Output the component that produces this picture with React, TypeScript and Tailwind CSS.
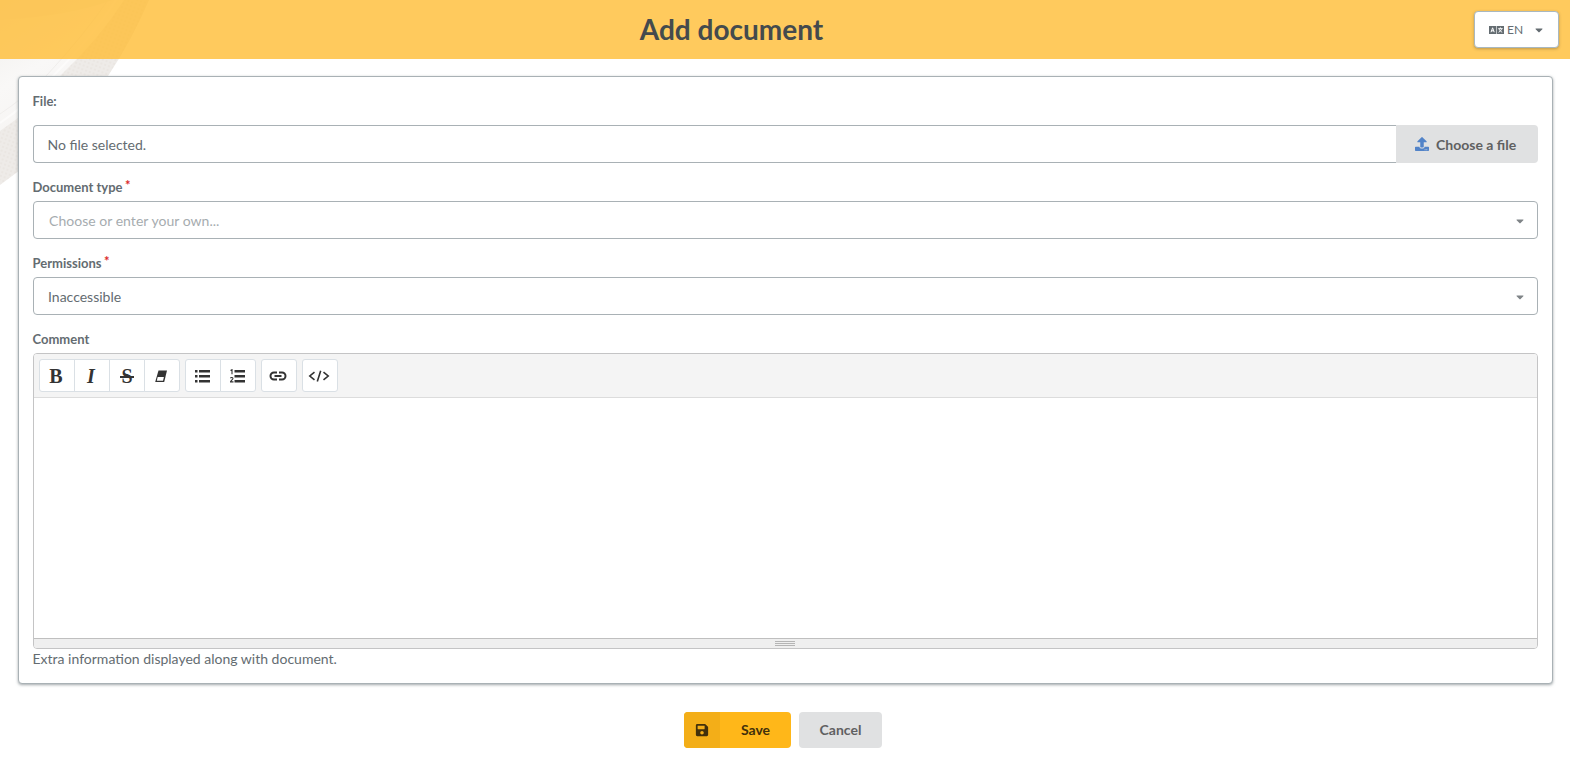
import React from "react";
import { FaUpload, FaSave, FaCaretDown } from "react-icons/fa";

const toolBtn = "flex h-[33px] w-[36px] items-center justify-center border border-[#dae0e5] bg-white text-[#333]";
const serifGlyph = "font-['Liberation_Serif',serif] text-[20px] font-bold leading-none pt-[1px] pr-[2px]";

function Label({ children, required }: { children: React.ReactNode; required?: boolean }) {
  return (
    <label className="-ml-[0.5px] block h-[18px] text-[13px] font-bold leading-[18px]">
      {children}
      {required && <span className="relative -top-[2px] ml-[2.5px] text-[13px] text-[#db2828]">*</span>}
    </label>
  );
}

function LanguageIcon() {
  return (
    <svg width="15" height="8" viewBox="0 0 15 8">
      <path d="M0 0h7.200v8H0zM7.800 0H15v8H7.800z" fill="currentColor" />
      <path d="M2 6.200 3.600 1.800 5.200 6.200M2.600 4.800h2" fill="none" stroke="#fff" strokeWidth="1" />
      <path d="M9.200 2.600h4.400M11.400 1.400v1.200M12.800 2.600Q12 5.200 9.600 6.300M10 3Q11 5.400 13.200 6.300" fill="none" stroke="#fff" strokeWidth="0.900" />
    </svg>
  );
}

function Backdrop() {
  return (
    <svg className="absolute left-0 top-0 -z-10" width="150" height="190" viewBox="0 0 150 190">
      <defs>
        <linearGradient id="fade" x1="0" y1="0" x2="0.6" y2="1">
          <stop offset="0" stopColor="#f0eeeb" />
          <stop offset="0.5" stopColor="#f9f8f7" />
          <stop offset="1" stopColor="#f5f3f1" />
        </linearGradient>
        <pattern id="dots" width="4" height="4" patternUnits="userSpaceOnUse" patternTransform="rotate(20)">
          <rect width="4" height="4" fill="#eeebe8" />
          <circle cx="1" cy="1" r="0.8" fill="#e6e1dc" />
        </pattern>
      </defs>
      <path d="M149 0 Q132 40 108 76 Q70 135 0 185 V0Z" fill="url(#dots)" />
      <path d="M124 0 Q100 38 62 74 L18 118 L0 131 V0Z" fill="url(#fade)" />
      <path d="M0 0H112Q70 16 0 20Z" fill="#ebe8e4" opacity="0.6" />
      <path d="M116 0 Q94 35 54 75 Q28 104 0 123" fill="none" stroke="#fcfbfa" strokeWidth="2" />
      <path d="M108 0 Q84 35 47 75 Q24 98 0 114" fill="none" stroke="#f0eeec" strokeWidth="1" />
    </svg>
  );
}

export default function App() {
  return (
    <div className="relative isolate h-[779px] w-full overflow-hidden bg-white font-[Lato,sans-serif] text-[14px] text-[#646c71]">
      <Backdrop />
      <header className="flex h-[59px] items-center bg-[#ffbd35]/80 pr-[11px]">
        <h1 className="mr-[11px] flex-1 pb-[2px] text-center text-[28px] font-bold leading-[36px] text-[#444a4d]">Add document</h1>
        <button className="flex h-[37px] w-[85px] items-center rounded-[4px] border border-[#a9b8c0] bg-white pl-[14px] text-[12px] shadow-[0_1px_3px_rgba(34,36,38,0.3)]">
          <LanguageIcon />
          <span className="ml-[3px]">EN</span>
          <FaCaretDown size={12} className="ml-[10px]" />
        </button>
      </header>
      <main className="mx-[18px] mr-[17px] mt-[17px] h-[608px] rounded-[4px] border border-[#a9b1b5] bg-white px-[14px] pt-[15px] shadow-[0_1px_3px_rgba(100,110,115,0.6)]">
        <Label>File:</Label>
        <div className="mt-[15px] flex h-[38px]">
          <div className="flex flex-1 items-center rounded-l-[4px] border border-r-0 border-[#a9b1b5] pl-[13.500px]">No file selected.</div>
          <button className="flex w-[142px] items-center rounded-r-[4px] bg-[#e0e1e2] pl-[19px] font-bold text-[#5f6061]">
            <FaUpload size={14} className="mr-[7px] text-[#5283c8]" />
            Choose a file
          </button>
        </div>
        <div className="mt-[15px]"><Label required>Document type</Label></div>
        <div className="mt-[5px] flex h-[38px] items-center justify-between rounded-[4px] border border-[#a9b1b5] pl-[15px] pr-[11px] text-[#a6acaf]">
          <span className="tracking-[0.03px]">Choose or enter your own...</span>
          <FaCaretDown size={12} className="mt-[2px] text-[#7f8487]" />
        </div>
        <div className="mt-[15px]"><Label required>Permissions</Label></div>
        <div className="mt-[5px] flex h-[38px] items-center justify-between rounded-[4px] border border-[#a9b1b5] pl-[14px] pr-[11px]">
          Inaccessible
          <FaCaretDown size={12} className="mt-[2px] text-[#7f8487]" />
        </div>
        <div className="mt-[15px]"><Label>Comment</Label></div>
        <div className="mt-[5px] flex h-[296px] flex-col overflow-hidden rounded-[4px] border border-[#c4c4c5]">
          <div className="flex h-[44px] gap-[5px] border-b border-[#dcdcdc] bg-[#f4f4f4] pl-[5px] pt-[5px]">
            <div className="flex -space-x-px">
              <button className={`${toolBtn} ${serifGlyph} rounded-l-[3px]`}>B</button>
              <button className={`${toolBtn} ${serifGlyph} italic`}>I</button>
              <button className={`${toolBtn} ${serifGlyph}`}>
                <span className="relative left-px">
                  S
                  <i className="absolute -left-[1.5px] top-[10px] h-[2px] w-[14px] bg-[#333]" />
                </span>
              </button>
              <button className={`${toolBtn} rounded-r-[3px] pr-[2px]`}>
                <svg width="14" height="14" viewBox="0 0 14 14">
                  <path d="M4.500 1.500H13l-2.800 11.500H1.200z" fill="currentColor" />
                  <path d="M3.700 8h6.200l-.9 3.700H2.800z" fill="#fff" />
                </svg>
              </button>
            </div>
            <div className="flex -space-x-px">
              <button className={`${toolBtn} rounded-l-[3px]`}>
                <svg width="16" height="14" viewBox="0 0 16 14" fill="currentColor"><path d="M0 1h2.500v2.500H0zM4 1h11v2.500H4zM0 6h2.500v2.500H0zM4 6h11v2.500H4zM0 11h2.500v2.500H0zM4 11h11v2.500H4z" /></svg>
              </button>
              <button className={`${toolBtn} rounded-r-[3px]`}>
                <svg width="16" height="14" viewBox="0 0 16 14">
                  <path d="M4.500 1H15v2.500H4.500zM4.500 6H15v2.500H4.500zM4.500 11H15v2.500H4.500z" fill="currentColor" />
                  <path d="M.5 1.500 2 .7v4.600M.4 9.200c.5-1.200 2.800-.9 2.500.5C2.600 10.700.6 11.800.5 12.900h3" fill="none" stroke="currentColor" strokeWidth="1.100" />
                </svg>
              </button>
            </div>
            <button className={`${toolBtn} rounded-[3px] pr-[2px]`}>
              <svg width="18" height="10" viewBox="0 0 18 10" fill="none" stroke="currentColor" strokeWidth="2"><path d="M8 1.500H5a3.500 3.500 0 0 0 0 7h3M10 1.500h3a3.500 3.500 0 0 1 0 7h-3M5.500 5h7" /></svg>
            </button>
            <button className={`${toolBtn} rounded-[3px] pr-[2px]`}>
              <svg width="22" height="12" viewBox="0 0 22 12" fill="none" stroke="currentColor" strokeWidth="1.600"><path d="M6.500 2.200 1.800 6l4.700 3.800M15.500 2.200 20.200 6l-4.700 3.800M12.700.8l-3.400 10.700" /></svg>
            </button>
          </div>
          <div className="flex-1" />
          <div className="flex h-[10px] flex-col items-center gap-px border-t border-[#bfbfbf] bg-[#efefef] pr-[2px] pt-[2px]">
            <i className="h-px w-[20px] bg-[#b5b5b5]" />
            <i className="h-px w-[20px] bg-[#b5b5b5]" />
            <i className="h-px w-[20px] bg-[#b5b5b5]" />
          </div>
        </div>
        <p className="-ml-[0.5px] leading-[20px] tracking-normal">Extra information displayed along with document.</p>
      </main>
      <div className="mt-[28px] flex justify-center gap-[8px] pr-[4px] font-bold">
        <button className="flex h-[36px] w-[107px] items-center overflow-hidden rounded-[4px] bg-[#ffb719] text-[#42300b]">
          <span className="flex h-full w-[36px] items-center justify-center bg-[#f3ae18] pb-px"><FaSave size={14} /></span>
          <span className="flex-1 pb-[2px] text-center">Save</span>
        </button>
        <button className="h-[36px] w-[83px] rounded-[4px] bg-[#e0e1e2] pb-[2px] text-[#5f6061]">Cancel</button>
      </div>
    </div>
  );
}
